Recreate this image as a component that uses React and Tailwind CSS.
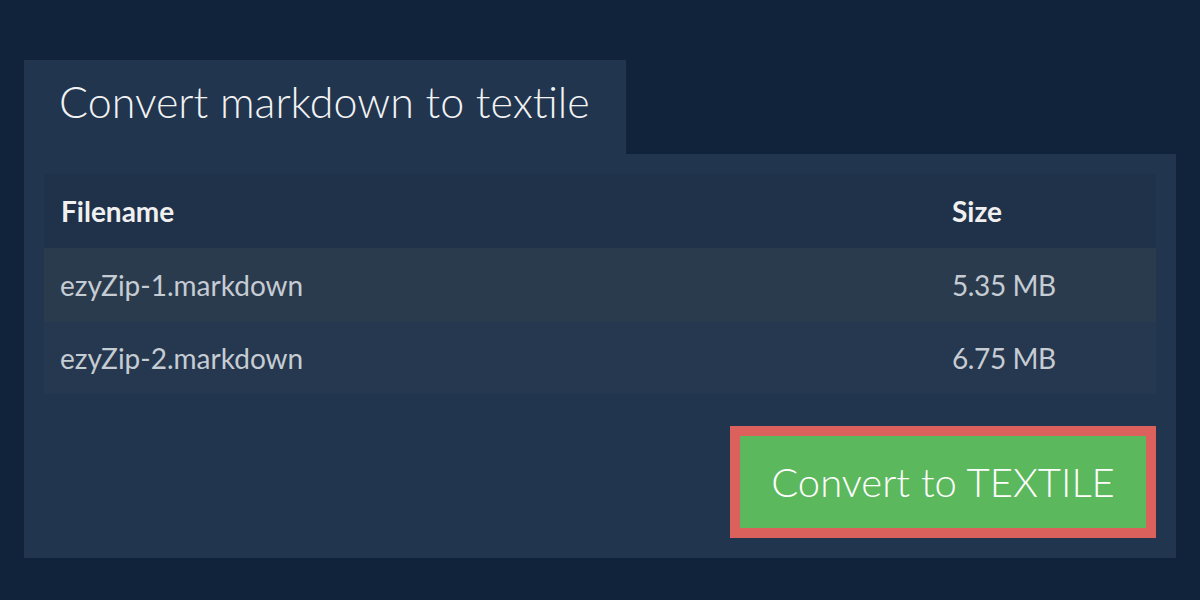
const files = [
  { name: 'ezyZip-1.markdown', size: '5.35 MB', bg: 'bg-[#2b3b4e]' },
  { name: 'ezyZip-2.markdown', size: '6.75 MB', bg: 'bg-[#25384f]' },
]

export default function App() {
  return (
    <div className="w-[1200px] h-[600px] bg-[#10233a] pt-[60px] px-[24px] font-['Lato','Liberation_Sans',sans-serif]">
      <div className="w-[602px] h-[94px] bg-[#21354f] flex items-center pl-[35px] pb-[12px]">
        <h1 className="text-[43px] font-light text-[#f2f2f2] leading-none">Convert markdown to textile</h1>
      </div>
      <div className="bg-[#21354f] px-[20px] pt-[20px] pb-[20px]">
        <div className="w-full">
          <div className="h-[74px] bg-[#1f3249] flex items-center text-[28px] font-bold text-[#f0f0f0]">
            <div className="w-[908px] pl-[17px]">Filename</div>
            <div>Size</div>
          </div>
          {files.map((f, i) => (
            <div key={i} className={`${f.bg} ${i === 0 ? 'h-[74px]' : 'h-[72px]'} flex items-center text-[28px] text-[#c6ccd3]`}>
              <div className="w-[908px] pl-[16px]">{f.name}</div>
              <div className="tracking-[-0.4px]">{f.size}</div>
            </div>
          ))}
        </div>
        <div className="flex justify-end mt-[32px]">
          <button className="w-[426px] h-[112px] border-[10px] border-[#dc605c] bg-[#5cb85c] text-white text-[40px] font-light leading-none">
            Convert to TEXTILE
          </button>
        </div>
      </div>
    </div>
  )
}
